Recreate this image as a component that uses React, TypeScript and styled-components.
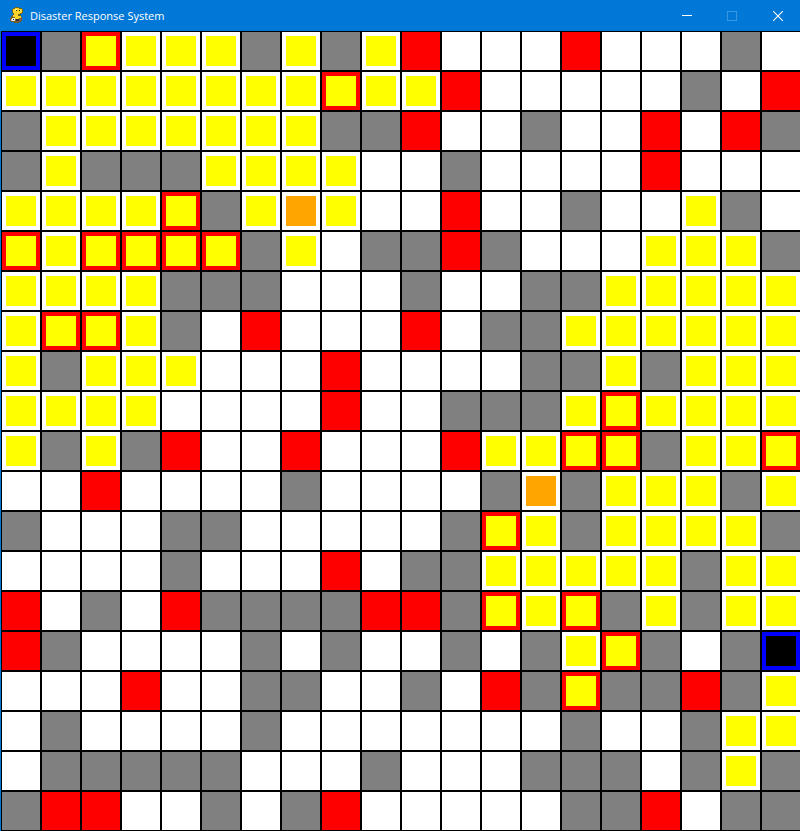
import React from 'react';
import styled, { createGlobalStyle } from 'styled-components';

type CellKind = 'W' | 'G' | 'R' | 'Y' | 'P' | 'B' | 'O';

// W empty, G wall, R fire, Y searched, P searched + fire, B endpoint, O frontier
const BOARD: string[] = [
  'BGPYYYGYGYRWWWRWWWGW',
  'YYYYYYYYPYYRWWWWWGWR',
  'GYYYYYYYGGRWWGWWRWRG',
  'GYGGGYYYYWWGWWWWRWWW',
  'YYYYPGYOYWWRWWGWWYGW',
  'PYPPPPGYWGGRGWWWYYYG',
  'YYYYGGGWWWGWWGGYYYYY',
  'YPPYGWRWWWRWGGYYYYYY',
  'YGYYYWWWRWWWWGGYGYYY',
  'YYYYWWWWRWWGGGYPYYYY',
  'YGYGRWWRWWWRYYPPGYYP',
  'WWRWWWWGWWWWGOGYYYGY',
  'GWWWGGWWWWWGPYGYYYYG',
  'WWWWGWWWRWGGYYYYYGYY',
  'RWGWRGGGGRRGPYPGYGYY',
  'RGWWWWGWGWWGWGYPGWGB',
  'WWWRWWGGWWGWRGPGGRGY',
  'WGWWWWGWWWWWWWGWWGYY',
  'WGGGGGWWWGWWWGGGWGYG',
  'GRRWWGWGRWWWWWGGRWGG',
];

const CELL_BG: Record<CellKind, string> = {
  W: '#ffffff',
  G: '#808080',
  R: '#ff0000',
  Y: '#ffffff',
  P: '#ff0000',
  B: '#0000ff',
  O: '#ffffff',
};

const CELL_INNER: Partial<Record<CellKind, string>> = {
  Y: '#ffff00',
  P: '#ffff00',
  B: '#000000',
  O: '#ffa500',
};

const GlobalStyle = createGlobalStyle`
  html, body {
    margin: 0;
    padding: 0;
    background: #000000;
    overflow: hidden;
  }
`;

const Window = styled.div`
  width: 800px;
  height: 831px;
  box-sizing: border-box;
  border-left: 1px solid #0078d7;
  display: flex;
  flex-direction: column;
  overflow: hidden;
  font-family: 'Open Sans', 'Noto Sans', sans-serif;
`;

const TitleBar = styled.div`
  height: 31px;
  flex: none;
  margin: 0 -1px;
  background: #0078d7;
  color: #ffffff;
  display: flex;
  align-items: center;
  padding-left: 9px;
`;

const AppIcon = styled.svg`
  width: 18px;
  height: 17px;
  flex: none;
  margin-right: 3px;
`;

const Title = styled.span`
  flex: 1;
  font-size: 11px;
  line-height: 16px;
`;

const WindowButton = styled.div`
  width: 46px;
  height: 31px;
  box-sizing: border-box;
  display: flex;
  align-items: center;
  justify-content: center;

  &:first-of-type {
    padding-left: 2px;
  }
`;

const Board = styled.div`
  flex: 1;
  background: #000000;
  padding: 1px 0 1px 1px;
  display: grid;
  grid-template-columns: repeat(20, 38px);
  grid-template-rows: repeat(20, 38px);
  gap: 2px;
`;

const Cell = styled.div<{ $bg: string }>`
  background: ${(p) => p.$bg};
  padding: 4px;
  box-sizing: border-box;
`;

const Marker = styled.div<{ $color: string }>`
  width: 30px;
  height: 30px;
  background: ${(p) => p.$color};
`;

const PygameIcon = () => (
  <AppIcon viewBox="0 0 18 17" shapeRendering="crispEdges">
    <path fill="#6e5f1a" d="M6 0h4v1h3v1h1v4h-1v1h-2v1h1v2h1v3h-1v2h-2v1H5v-1H2v-1H1v-3h1v-2h1V8h1V6H3V2h1V1h2z" />
    <path fill="#ffd42a" d="M6 1h4v1h3v4h-2v1H9v2h3v2h-2v1H6v-2H4V8h1V6H4V2h2z" />
    <path fill="#fff176" d="M6 2h2v2H6zM10 3h2v1h-2z" />
    <path fill="#2b261a" d="M7 3h1v1H7zM10 3h1v1h-1z" />
    <path fill="#f0f0f0" d="M3 11h3v3H3z" />
    <path fill="#2f2f2f" d="M4 12h1v1H4zM7 12h3v2H7z" />
    <path fill="#7d5a44" d="M10 11h3v3h-3zM6 14h4v1H6z" />
    <path fill="#bdbdbd" d="M2 12h1v2H2z" />
  </AppIcon>
);

const MinimizeIcon = () => (
  <svg width="10" height="1" viewBox="0 0 10 1">
    <rect width="10" height="1" fill="#ffffff" />
  </svg>
);

const MaximizeIcon = () => (
  <svg width="10" height="10" viewBox="0 0 10 10">
    <rect x="0.5" y="0.5" width="9" height="9" fill="none" stroke="#3996e0" />
  </svg>
);

const CloseIcon = () => (
  <svg width="10" height="10" viewBox="0 0 10 10">
    <path d="M0 0L10 10M10 0L0 10" stroke="#ffffff" strokeWidth="1.1" fill="none" />
  </svg>
);

export default function App() {
  return (
    <>
      <GlobalStyle />
      <Window>
        <TitleBar>
          <PygameIcon />
          <Title>Disaster Response System</Title>
          <WindowButton>
            <MinimizeIcon />
          </WindowButton>
          <WindowButton>
            <MaximizeIcon />
          </WindowButton>
          <WindowButton>
            <CloseIcon />
          </WindowButton>
        </TitleBar>
        <Board>
          {BOARD.flatMap((row, y) =>
            row.split('').map((ch, x) => {
              const kind = ch as CellKind;
              const inner = CELL_INNER[kind];
              return (
                <Cell key={`${x}-${y}`} $bg={CELL_BG[kind]}>
                  {inner && <Marker $color={inner} />}
                </Cell>
              );
            })
          )}
        </Board>
      </Window>
    </>
  );
}
